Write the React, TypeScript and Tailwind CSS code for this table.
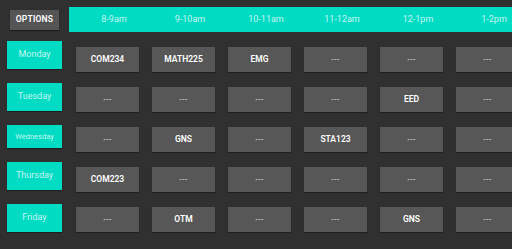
import React from "react";

const times = ["8-9am", "9-10am", "10-11am", "11-12am", "12-1pm", "1-2pm"];
const days = ["Monday", "Tuesday", "Wednesday", "Thursday", "Friday"];
const data = [
  ["COM234", "MATH225", "EMG", "---", "---", "---"],
  ["---", "---", "---", "---", "EED", "---"],
  ["---", "GNS", "---", "STA123", "---", "---"],
  ["COM223", "---", "---", "---", "---", "---"],
  ["---", "OTM", "---", "---", "GNS", "---"],
];

export default function App() {
  return (
    <div
      className="w-[512px] h-[249px] bg-[#303030] overflow-hidden flex flex-col"
      style={{ fontFamily: "Roboto, 'Liberation Sans', sans-serif" }}
    >
      <div className="flex items-center pt-[7px] shrink-0">
        <div className="w-[69px] pl-[10px] shrink-0">
          <div className="w-[49px] h-[20px] bg-[#555555] flex items-center justify-center text-white text-[8.5px] font-semibold tracking-[0.2px] shadow-[0_1px_1px_rgba(0,0,0,0.4)]">
            OPTIONS
          </div>
        </div>
        <div className="flex-1 h-[25px] bg-[#00dcc4] flex pl-[7px] overflow-hidden">
          {times.map((t) => (
            <div
              key={t}
              className="w-[76px] shrink-0 flex items-center justify-center text-[9px] text-[#c4f5ee]"
            >
              {t}
            </div>
          ))}
        </div>
      </div>
      <div className="flex">
        <div className="flex flex-col gap-[14px] pt-[9px] pl-[7px] w-[55px] box-content shrink-0">
          {days.map((d) => (
            <div
              key={d}
              className={`w-[55px] bg-[#00dcc4] flex items-center justify-center text-[#c4f5ee] shadow-[0_1px_1px_rgba(0,0,0,0.35)] ${
                d === "Wednesday" ? "h-[23px] text-[7.5px]" : "h-[28px] text-[9px]"
              }`}
            >
              {d}
            </div>
          ))}
        </div>
        <div className="flex flex-col gap-[15px] pt-[15px] pl-[14px]">
          {data.map((row, i) => (
            <div key={i} className="flex gap-[13px]">
              {row.map((c, j) => (
                <div
                  key={j}
                  className={`w-[63px] h-[25px] shrink-0 bg-[#575757] flex items-center justify-center font-semibold shadow-[0_1px_1px_rgba(0,0,0,0.35)] ${
                    c === "---" ? "text-[7.5px] text-[#c8c8c8]" : "text-[8.5px] text-white"
                  }`}
                >
                  {c}
                </div>
              ))}
            </div>
          ))}
        </div>
      </div>
    </div>
  );
}
